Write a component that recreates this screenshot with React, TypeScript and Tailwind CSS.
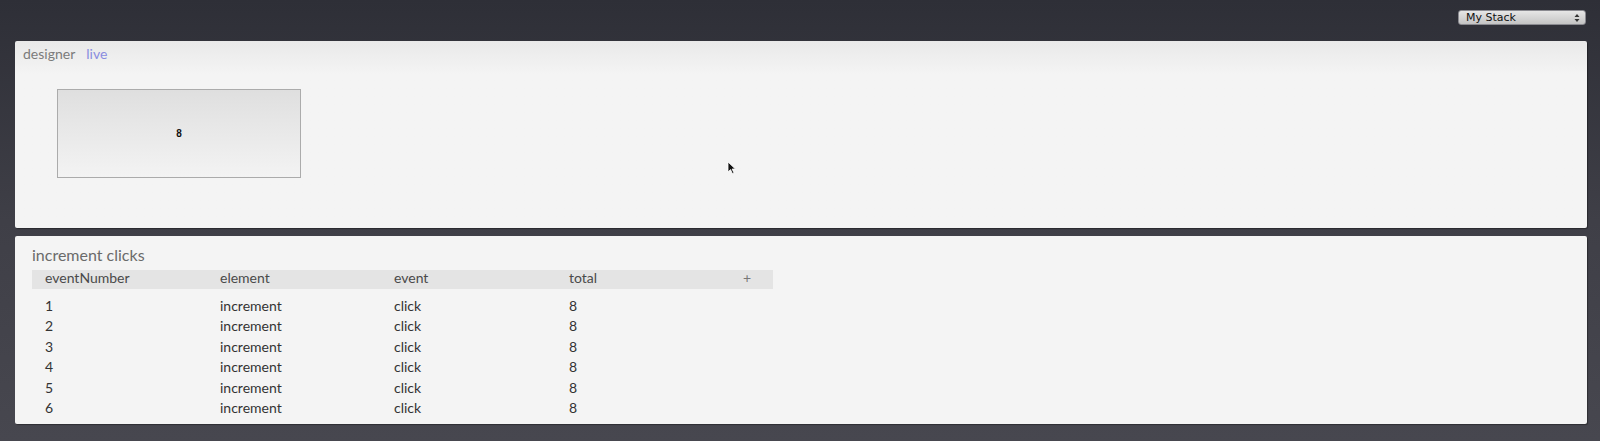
import React from "react"

const rows = [1, 2, 3, 4, 5, 6]

const App: React.FC = () => {
  return (
    <div className="relative flex h-[441px] w-[1600px] flex-col bg-gradient-to-b from-[#2e2f37] via-[#3f3f47] to-[#47474f] font-['Lato','Open_Sans',sans-serif]">
      <div className="flex h-[41px] items-start justify-end pr-[14px] pt-[10px]">
        <div className="flex h-[15px] w-[128px] items-center justify-between rounded-[3px] border border-[#8a8a90] bg-gradient-to-b from-[#e6e6e6] to-[#c4c4c4] pl-[7px] pr-[5px] font-['DejaVu_Sans',sans-serif] text-[11px] leading-none text-[#111]">
          <span>My Stack</span>
          <svg width="6" height="10" viewBox="0 0 6 10" aria-hidden="true">
            <path d="M0.5 4 L3 1 L5.5 4 Z M0.5 6 L3 9 L5.5 6 Z" fill="#333" />
          </svg>
        </div>
      </div>

      <section className="mx-[15px] mr-[13px] h-[187px] rounded-[2px] bg-gradient-to-b from-[#e9e9e9] via-[#f4f4f4] via-[18%] to-[#f4f4f4] shadow-[1px_1px_1px_rgba(0,0,0,0.35)]">
        <div className="flex gap-[11px] pl-[8px] pt-[5px] text-[14px] leading-[16px]">
          <span className="text-[#7b7b7b]">designer</span>
          <span className="text-[#8a8ce0]">live</span>
        </div>
        <div className="ml-[42px] mt-[27px] flex h-[89px] w-[244px] items-center justify-center border border-[#ababab] bg-gradient-to-b from-[#dfdfdf] to-[#f3f3f3]">
          <span className="font-['Liberation_Sans',sans-serif] text-[10px] font-bold text-[#111]">8</span>
        </div>
      </section>

      <section className="mx-[15px] mr-[13px] mt-[8px] h-[188px] rounded-[2px] bg-[#f4f4f4] px-[17px] pt-[9px] shadow-[1px_1px_1px_rgba(0,0,0,0.35)]">
        <div className="text-[16px] leading-[20px] text-[#6a6a6a]">increment clicks</div>
        <div className="mt-[5px] w-[741px]">
          <div className="grid h-[19px] grid-cols-[188px_174px_175px_174px_30px] items-center bg-[#e4e4e4] pb-[3px] text-[14px] leading-none text-[#4a4a4a]">
            <span className="pl-[13px]">eventNumber</span>
            <span>element</span>
            <span>event</span>
            <span>total</span>
            <span className="text-[#777]">+</span>
          </div>
          <div className="mt-[6px]">
            {rows.map((n) => (
              <div
                key={n}
                className="grid h-[20.4px] grid-cols-[188px_174px_175px_174px_30px] items-center text-[14px] text-[#333]">
                <span className="pl-[13px]">{n}</span>
                <span>increment</span>
                <span>click</span>
                <span>8</span>
                <span />
              </div>
            ))}
          </div>
        </div>
      </section>

      <svg
        className="absolute left-[727px] top-[161px]"
        width="10"
        height="14"
        viewBox="0 0 10 14"
        aria-hidden="true">
        <path d="M1 1 L1 11 L3.5 8.6 L5.4 12.6 L7 11.9 L5.1 8 L8.4 8 Z" fill="#111" stroke="#fff" strokeWidth="0.8" />
      </svg>
    </div>
  )
}

export default App
